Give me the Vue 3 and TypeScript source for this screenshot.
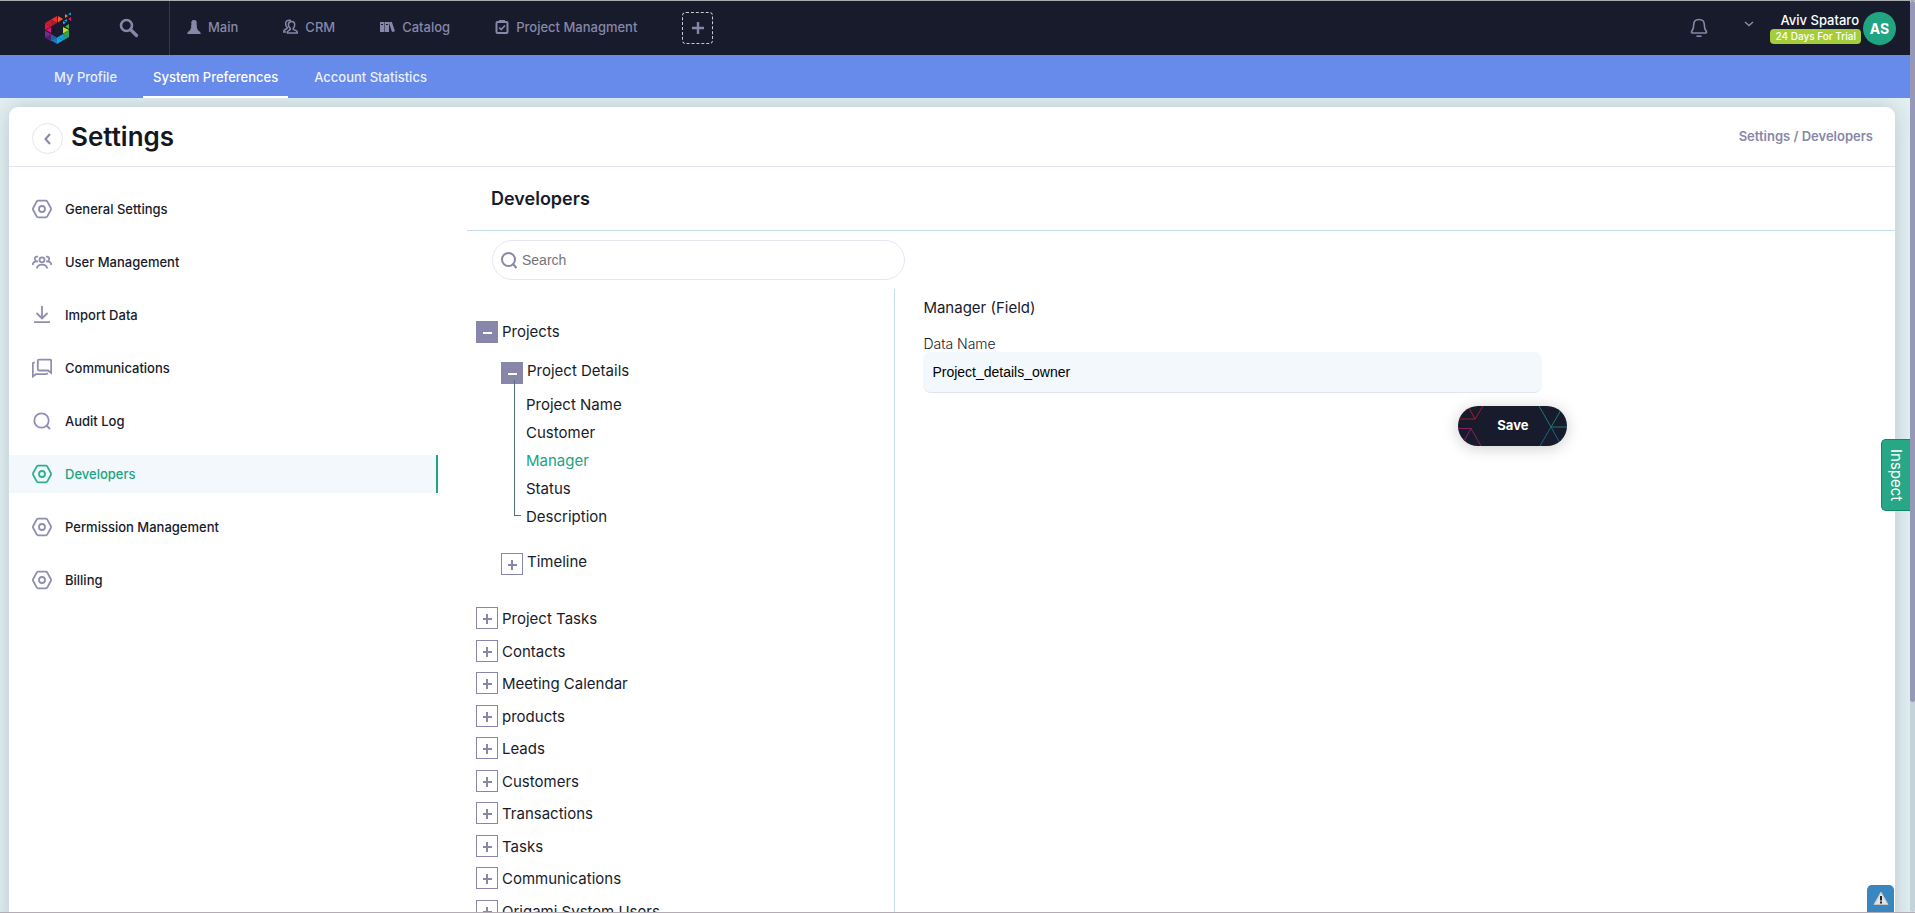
<script setup lang="ts">
import { ref } from 'vue'

interface NavItem { label: string; icon: string }
interface TreeRow { label: string }

const mainNav: NavItem[] = [
  { label: 'Main', icon: 'pawn' },
  { label: 'CRM', icon: 'people' },
  { label: 'Catalog', icon: 'books' },
  { label: 'Project Managment', icon: 'clipboard' },
]
const tabs = ['My Profile', 'System Preferences', 'Account Statistics']
const activeTab = ref('System Preferences')

const sideNav: NavItem[] = [
  { label: 'General Settings', icon: 'hex' },
  { label: 'User Management', icon: 'users' },
  { label: 'Import Data', icon: 'download' },
  { label: 'Communications', icon: 'chat' },
  { label: 'Audit Log', icon: 'search' },
  { label: 'Developers', icon: 'hex' },
  { label: 'Permission Management', icon: 'hex' },
  { label: 'Billing', icon: 'hex' },
]
const activeSide = ref('Developers')

const fields = ['Project Name', 'Customer', 'Manager', 'Status', 'Description']
const activeField = ref('Manager')
const entities: TreeRow[] = [
  'Project Tasks', 'Contacts', 'Meeting Calendar', 'products', 'Leads',
  'Customers', 'Transactions', 'Tasks', 'Communications', 'Origami System Users',
].map((label) => ({ label }))

const query = ref('')
const dataName = ref('Project_details_owner')
</script>

<template>
  <div class="window">
    <div class="page">
      <header class="topbar">
        <a class="logo" href="#" aria-label="Home">
          <svg width="28" height="32" viewBox="44 12 28 32">
            <path fill="#c4202c" d="M45 23l6-3.500v7z" />
            <path fill="#ef2a36" d="M51 19.500l6-3.500v7z" />
            <path fill="#a81e2b" d="M51 19.500l6 3.500-6 3.500z" />
            <path fill="#e5123f" d="M45 23l6 3.500-6 3.500z" />
            <path fill="#f15a2b" d="M58 16l5 3-5 3.500z" />
            <path fill="#ec0b7c" d="M51 27v6l-5-3z" />
            <path fill="#6f2c91" d="M45 30.500l6 3.500-6 3.500z" />
            <path fill="#8d3596" d="M51 34v7l-6-3.500z" />
            <path fill="#4b2067" d="M45 37.500l6-3v6z" />
            <path fill="#1d5fa8" d="M51 34l6 3.500-6 3.500z" />
            <path fill="#1b75bb" d="M57 37.500V44l-6-3.500z" />
            <path fill="#12a7e0" d="M57 37.500l6 3L57 44z" />
            <path fill="#1c9ccc" d="M63 34v6.500l-6-3z" />
            <path fill="#1b9f8b" d="M63 34l6 3-6 3.500z" />
            <path fill="#35a648" d="M69 30v7.500L63 34z" />
            <path fill="#c6d92f" d="M63 27l6 3-6 3.500z" />
            <path fill="#3fae49" d="M69 24v5l-4-2.500z" />
            <path fill="#f58220" d="M65 14l3 2-3 2z" />
            <path fill="#159fd8" d="M71 12.500v3l-3-1.500zM67 19v3l-3-1.500z" />
            <path fill="#ec0b7c" d="M71 17v4l-3-2z" />
            <path fill="#18b5e8" d="M63 21l3 2-3 1z" />
          </svg>
        </a>
        <button class="icon-btn find" type="button" aria-label="Search everywhere">
          <svg width="20" height="20" viewBox="0 0 20 20" fill="none" stroke="#8887a9">
            <circle cx="7.500" cy="7.500" r="5.500" stroke-width="2.600" />
            <path d="M11.500 11.500l6 6" stroke-width="3.200" stroke-linecap="round" />
          </svg>
        </button>
        <nav class="main-nav">
          <a v-for="n in mainNav" :key="n.label" href="#">
            <svg v-if="n.icon === 'pawn'" width="14" height="16" viewBox="0 0 14 16" fill="#8887a9">
              <path d="M7 1a2.700 2.700 0 0 1 2.200 4.400l.8.400v1.400h-.4c.3 2.300 1.200 3.700 2.500 5.300h.9l.8 2.500H.2l.8-2.500h.9c1.300-1.600 2.200-3 2.500-5.300H4V5.800l.8-.4A2.700 2.700 0 0 1 7 1z" />
            </svg>
            <svg v-else-if="n.icon === 'people'" width="15" height="16" viewBox="0 0 15 16" fill="none" stroke="#8887a9" stroke-width="1.500">
              <path d="M8.500 2.500c2.300 0 3.200 1.500 3.200 3.300 0 1.700-.7 2.800-1.500 3.600v.9l3.300 1.600c.6.300.8 1 .8 2H4.400c0-1 .2-1.700.8-2l2-1.200V9.400C6.300 8.600 5.400 7.500 5.400 5.800c0-1.800 1-3.300 3.100-3.300z" />
              <path d="M8 1.500C5 .5 2.600 2 2.600 4.800c0 1.700.6 2.700 1.500 3.500v1L1.500 11c-.5.300-.7 1-.7 2h2.500" />
            </svg>
            <svg v-else-if="n.icon === 'books'" width="15" height="16" viewBox="0 0 15 16">
              <path fill="#8887a9" d="M0 3h4.300v10H0zM4.800 3h4.200v10H4.800zM8.800 3.500l3-.8 3.200 9.500-3 .9z" />
              <path stroke="#171b2b" d="M1 5.500h2M6 5.500h2" />
            </svg>
            <svg v-else width="14" height="16" viewBox="0 0 14 16" fill="none" stroke="#8887a9" stroke-width="2">
              <rect x="1.500" y="3" width="11" height="11" rx="1" /><path d="M4 2.500h6" stroke-width="3" /><path d="M4.200 8.500l2 2 3.800-4" stroke-width="1.700" />
            </svg>
            <span>{{ n.label }}</span>
          </a>
          <button class="add" type="button" aria-label="Add workspace">
            <svg width="12" height="12" viewBox="0 0 12 12" stroke="#8887a9" stroke-width="2.400"><path d="M6 0v12M0 6h12" /></svg>
          </button>
        </nav>
        <div class="account">
          <button class="icon-btn" type="button" aria-label="Notifications">
            <svg width="18" height="20" viewBox="0 0 18 20" fill="none" stroke="#8887a9" stroke-width="1.600">
              <path d="M9 1.500c3.200 0 5.300 2 5.300 5.200 0 3.400.3 4.800 2 6.700.6.900.2 1.600-.6 1.600H2.300c-.8 0-1.200-.7-.6-1.600 1.700-1.900 2-3.300 2-6.700C3.700 3.500 5.800 1.500 9 1.500z" />
              <path d="M6.500 18.200h5" />
            </svg>
          </button>
          <button class="icon-btn chev" type="button" aria-label="Account menu">
            <svg width="10" height="6" viewBox="0 0 10 6" fill="none" stroke="#8d8c9f" stroke-width="1.500"><path d="M1 1l4 3.500L9 1" /></svg>
          </button>
          <div class="who">
            <span class="name">Aviv Spataro</span>
            <span class="trial">24 Days For Trial</span>
          </div>
          <span class="avatar">AS</span>
        </div>
      </header>

      <nav class="tabs">
        <a v-for="t in tabs" :key="t" href="#" :class="{ on: t === activeTab }" @click.prevent="activeTab = t">{{ t }}</a>
      </nav>

      <main class="card">
        <div class="card-head">
          <button class="back" type="button" aria-label="Back">
            <svg width="8" height="12" viewBox="0 0 8 12" fill="none" stroke="#8887a9" stroke-width="2"><path d="M6 1L1.500 6L6 11" /></svg>
          </button>
          <h1>Settings</h1>
          <div class="crumbs"><a href="#">Settings</a> / <a href="#">Developers</a></div>
        </div>
        <div class="card-body">
          <nav class="side">
            <a v-for="s in sideNav" :key="s.label" href="#" :class="{ on: s.label === activeSide }" @click.prevent="activeSide = s.label">
              <svg width="20" height="20" viewBox="0 0 20 20" fill="none" stroke="currentColor" stroke-width="1.800">
                <template v-if="s.icon === 'hex'">
                  <path d="M6.200 1.700h7.600q1 0 1.500.9l3.500 6.400q.5 1 0 2l-3.500 6.400q-.5.900-1.500.9H6.200q-1 0-1.500-.9L1.200 11q-.5-1 0-2l3.500-6.400q.5-.9 1.500-.9z" />
                  <circle cx="10" cy="10" r="3" />
                </template>
                <template v-else-if="s.icon === 'users'">
                  <circle cx="10" cy="7.800" r="2.500" />
                  <path d="M4.800 16.500c.4-2.400 2.500-3.900 5.200-3.900s4.800 1.500 5.200 3.900M6 4.700c-2-.5-3.300.6-3.200 2.100 0 1 .5 1.700 1.300 2.100M14 4.700c2-.5 3.300.6 3.200 2.100 0 1-.5 1.700-1.300 2.100M6 9.500c-3-.4-5 .8-5.400 3.500M14 9.500c3-.4 5 .8 5.400 3.500" />
                </template>
                <path v-else-if="s.icon === 'download'" d="M10 1v12M4.500 8l5.500 5.500L15.500 8M2 17.200h16" />
                <template v-else-if="s.icon === 'chat'">
                  <path d="M7 1.700h11q1.200 0 1.200 1.200v12l-3-2.400H7q-1.200 0-1.200-1.200V2.900Q5.800 1.700 7 1.700z" />
                  <path d="M2.800 4.700H2Q.8 4.700.8 6v12.500l3-2.300H14q1.500 0 1.500-1.500" />
                </template>
                <template v-else><circle cx="9.500" cy="9.500" r="7.200" /><path d="M14.500 14.500l3.500 3.500" /></template>
              </svg>
              <span>{{ s.label }}</span>
            </a>
          </nav>

          <section class="content">
            <h2>Developers</h2>
            <label class="search">
              <svg width="16" height="17" viewBox="0 0 16 17" fill="none" stroke="#8887a9" stroke-width="2"><circle cx="7.500" cy="7.500" r="6.500" /><path d="M11.500 11.500l4 4.500" /></svg>
              <input v-model="query" type="text" placeholder="Search" aria-label="Search" />
            </label>
            <div class="split">
              <div class="tree">
                <div class="row"><button class="box open" type="button" aria-label="Collapse Projects"><i></i></button><span>Projects</span></div>
                <div class="branch">
                  <div class="row"><button class="box open" type="button" aria-label="Collapse Project Details"><i></i></button><span>Project Details</span></div>
                  <ul>
                    <li v-for="f in fields" :key="f"><a href="#" :class="{ on: f === activeField }" @click.prevent="activeField = f">{{ f }}</a></li>
                  </ul>
                  <div class="row"><button class="box" type="button" aria-label="Expand Timeline"><i></i></button><span>Timeline</span></div>
                </div>
                <div class="entities">
                  <div v-for="e in entities" :key="e.label" class="row"><button class="box" type="button" :aria-label="'Expand ' + e.label"><i></i></button><span>{{ e.label }}</span></div>
                </div>
              </div>
              <form class="detail" @submit.prevent>
                <h3>{{ activeField }} (Field)</h3>
                <label for="data-name">Data Name</label>
                <input id="data-name" v-model="dataName" type="text" />
                <button class="save" type="submit">
                  <svg width="109" height="40" viewBox="0 0 109 40" fill="none" stroke-width="1">
                    <path stroke="#a01d30" d="M0 13h17L11 2M17 13L25 0" />
                    <path stroke="#8a2064" d="M0 22.500h13L6 35M13 22.500L23 40" />
                    <path stroke="#217a6c" d="M81 0l12 21 10-17M93 21h16" />
                    <path stroke="#1c6684" d="M82 40l11-19 9 16" />
                  </svg>
                  <span>Save</span>
                </button>
              </form>
            </div>
          </section>
        </div>
      </main>
      <button class="inspect" type="button">Inspect</button>
      <button class="warn" type="button" aria-label="Warnings">
        <svg width="16" height="15" viewBox="0 0 16 15"><path d="M8 1l7 12.500H1z" fill="#e2e2e2" stroke="#c2c4c6" /><path d="M8 5v4.500M8 10.500v2" stroke="#222" stroke-width="2" /></svg>
      </button>
    </div>
    <div class="rail"><div class="thumb"></div></div>
  </div>
</template>

<style>
body { margin: 0; }
</style>

<style scoped>
* { box-sizing: border-box; }
a { color: inherit; text-decoration: none; }
button { font: inherit; padding: 0; border: 0; background: none; cursor: pointer; }
svg { display: block; flex: none; }
h1, h2, h3, ul { margin: 0; padding: 0; list-style: none; }

.window {
  display: flex; height: 100vh; overflow: hidden;
  border-top: 1px solid #a9adb1; border-bottom: 1px solid #b5abb5;
  font-family: Inter, "Noto Sans", sans-serif; color: #171b2b;
  background: #e4f1f3;
}
.page { position: relative; flex: 1; min-width: 0; overflow: hidden; display: flex; flex-direction: column; }
.rail { width: 5px; background: #c4d3da; border-radius: 3px; }
.thumb { height: 77%; background: #9698b8; border-radius: 3px; }

.topbar { position: relative; z-index: 2; flex: none; display: flex; align-items: stretch; height: 54px; background: #171b2b; color: #8887a9; font-size: 13px; font-weight: 500; }
.logo { margin: 11px 0 0 44px; }
.icon-btn { display: flex; align-items: center; }
.find { margin-left: 47px; padding-bottom: 1px; }
.main-nav { display: flex; align-items: center; gap: 45px; margin-left: 30px; padding-left: 17px; border-left: 1px solid #353a4b; }
.main-nav a { display: flex; align-items: center; gap: 7px; padding-bottom: 3px; }
.add { display: flex; align-items: center; justify-content: center; width: 31px; height: 32px; border: 1px dashed #c8cad0; border-radius: 4px; }
.account { display: flex; align-items: center; margin-left: auto; padding-right: 14px; }
.chev { margin: 0 16px 8px 36px; }
.who { display: flex; flex-direction: column; align-items: flex-end; }
.name { padding-right: 2px; color: #fff; font-size: 13px; font-weight: 500; line-height: 17px; }
.trial { padding: 0 5px; border-radius: 4px; background: #a5cd39; color: #fff; font-size: 10px; font-weight: 500; line-height: 15px; }
.avatar { width: 33px; height: 33px; margin-left: 2px; border-radius: 50%; background: #20a482; color: #fff; font-size: 14px; font-weight: 700; line-height: 33px; text-align: center; }

.tabs { position: relative; z-index: 2; flex: none; display: flex; gap: 16px; height: 43px; padding-left: 44px; background: #668bea; }
.tabs a { padding: 0 10px; border-bottom: 2px solid transparent; color: #eaf0ff; font-size: 13px; font-weight: 500; line-height: 45px; }
.tabs a.on { border-color: #fff; color: #fff; }

.card { flex: 1 0 auto; margin: 9px 15px 0 9px; border-radius: 9px 9px 0 0; background: #fff; box-shadow: 0 0 24px rgba(75, 95, 120, 0.3); }
.card-head { display: flex; align-items: center; height: 60px; padding: 0 22px 0 23px; border-bottom: 1px solid #e4e4ef; }
.back { display: flex; align-items: center; justify-content: center; width: 31px; height: 31px; margin-top: 4px; border: 1px solid #e6e4f0; border-radius: 50%; }
h1 { margin-left: 8px; font-size: 26px; font-weight: 600; line-height: 36px; color: #15171e; }
.crumbs { margin-left: auto; padding-bottom: 2px; color: #8887a9; font-size: 13px; font-weight: 600; }
.card-body { display: flex; }

.side { flex: none; display: flex; flex-direction: column; gap: 15px; width: 429px; padding-top: 23px; }
.side a { display: flex; align-items: center; gap: 13px; height: 38px; padding-left: 23px; font-size: 13px; font-weight: 500; }
.side svg { color: #8f8eb0; }
.side a.on { border-right: 2px solid #20a482; background: #f2f8fb; color: #20a482; }
.side a.on svg { color: #2fb091; }

.content { flex: 1; min-width: 0; margin-left: 29px; }
h2 { height: 64px; padding-left: 24px; border-bottom: 1px solid #c5dcec; font-size: 18px; font-weight: 600; line-height: 64px; }
.search { display: flex; align-items: center; gap: 5px; width: 413px; height: 40px; margin: 9px 0 9px 25px; padding: 0 8px; border: 1px solid #e8e5f2; border-radius: 20px; }
.search input { flex: 1; min-width: 0; padding: 0; border: 0; outline: 0; background: none; font: 14px "Liberation Sans", Arial, sans-serif; }
.search input::placeholder { color: #757575; }
.split { display: flex; }

.tree { flex: none; width: 30%; padding: 32px 0 0 9px; border-right: 1px solid #c5dcec; font-size: 15px; }
.row { display: flex; align-items: center; gap: 4px; height: 22px; line-height: 22px; }
.entities span { padding-top: 2px; }
.branch .row span { padding-bottom: 4px; }
.box { position: relative; width: 22px; height: 22px; flex: none; border: 1px solid #8887a9; }
.box i::before, .box i::after { content: ""; position: absolute; left: 6px; top: 10px; width: 9px; height: 2px; background: #8887a9; }
.box i::after { left: 9px; top: 6px; width: 2px; height: 10px; }
.box.open { background: #8887a9; }
.box.open i::before { background: #fff; }
.box.open i::after { display: none; }
.branch { margin: 19px 0 32px 25px; }
.branch ul { position: relative; margin: 7px 0 22px; padding-left: 25px; }
.branch ul::before { content: ""; position: absolute; left: 13px; top: -11px; bottom: 15px; width: 6px; border: solid #527373; border-width: 0 0 1px 1px; }
.branch li { height: 28px; line-height: 28px; }
.branch a.on { color: #20a482; }
.entities .row { margin-bottom: 10px; }
.entities .row:nth-child(odd) { margin-bottom: 11px; }

.detail { flex: 1; max-width: 672px; padding: 6px 0 0 28px; display: flex; flex-direction: column; align-items: flex-start; }
h3 { font-size: 15px; font-weight: 400; line-height: 26px; }
.detail label { margin-top: 14px; font-size: 14px; font-weight: 300; line-height: 17px; }
.detail input { width: 96%; height: 41px; padding: 0 9px; border: 0; border-bottom: 1px solid #e1e4ef; border-radius: 8px; outline: 0; background: #f2f8fb; color: #000; font: 14px "Liberation Sans", Arial, sans-serif; }
.save { position: relative; align-self: flex-end; width: 109px; height: 40px; margin-top: 13px; padding-bottom: 3px; overflow: hidden; border-radius: 20px; background: #171b2b; color: #fff; font-size: 13px; font-weight: 700; box-shadow: 0 2px 16px rgba(0, 0, 0, 0.2); }
.save svg { position: absolute; inset: 0; }
.save span { position: relative; }

.inspect { position: absolute; right: 0; top: 438px; z-index: 3; width: 29px; height: 72px; border: 1px solid #138763; border-right: 0; border-radius: 5px 0 0 5px; background: #27a786; color: #fff; font-size: 15px; writing-mode: vertical-rl; }
.warn { position: absolute; right: 16px; bottom: 0; z-index: 3; display: flex; align-items: center; justify-content: center; width: 27px; height: 27px; border-radius: 5px 5px 0 0; background: #3986c0; }
</style>
